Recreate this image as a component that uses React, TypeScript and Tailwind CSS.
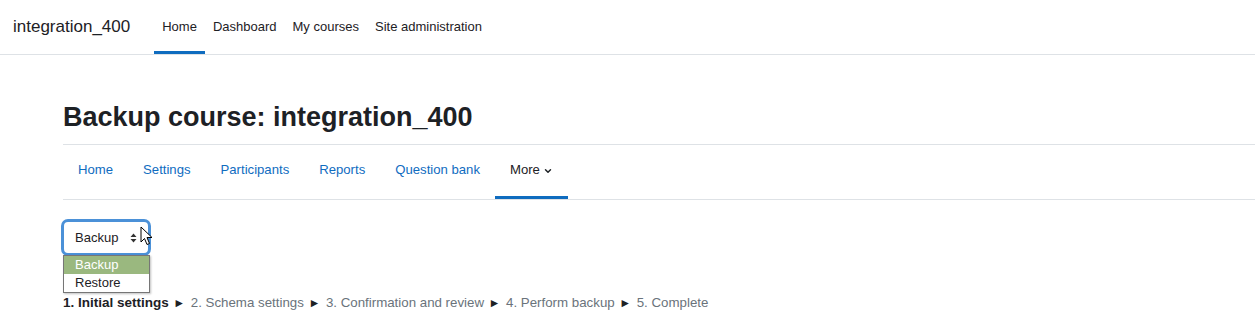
import { ChevronDown } from 'lucide-react'

const topLinks = ['Home', 'Dashboard', 'My courses', 'Site administration']
const courseLinks = ['Home', 'Settings', 'Participants', 'Reports', 'Question bank']
const steps = ['2. Schema settings', '3. Confirmation and review', '4. Perform backup', '5. Complete']

function Cursor() {
  return (
    <svg width="13" height="20" viewBox="0 0 13 20" className="absolute left-[77px] top-[7px]">
      <path d="M1 1 L1 16 L4.5 12.5 L7 18.5 L9.5 17.5 L7 11.5 L12 11.5 Z" fill="#fff" stroke="#000" strokeWidth="1" strokeLinejoin="round" />
    </svg>
  )
}

export default function App() {
  return (
    <div className="w-[1255px] h-[326px] overflow-hidden bg-white text-[#1d2125] font-['Liberation_Sans',Arial,sans-serif]">
      {/* top navbar */}
      <nav className="flex h-[55px] items-stretch border-b border-[#dee2e6]">
        <div className="flex items-center pl-[13px] pr-[24px] text-[17px] text-[#1d2125]">integration_400</div>
        <ul className="flex items-stretch">
          {topLinks.map((l, i) => (
            <li
              key={l}
              className={`flex items-center px-[8px] text-[13px] ${i === 0 ? 'border-b-[3px] border-[#0f6cbf] pt-[3px]' : ''}`}
            >
              {l}
            </li>
          ))}
        </ul>
      </nav>

      <div className="pl-[63px]">
        <h1 className="pt-[45px] pb-[10px] text-[27px] font-bold leading-[34px]">Backup course: integration_400</h1>

        {/* course nav */}
        <ul className="flex h-[56px] border-y border-[#dee2e6]">
          {courseLinks.map((l) => (
            <li key={l} className="flex items-center px-[15px] pb-[5px] text-[13.15px] text-[#0f6cbf]">
              {l}
            </li>
          ))}
          <li className="flex items-center gap-[3px] border-b-[3px] border-[#0f6cbf] px-[15px] pb-[2px] text-[13.15px]">
            More <ChevronDown size={10} strokeWidth={3.5} className="mt-[2px]" />
          </li>
        </ul>

        {/* action select */}
        <div className="relative mt-[19px] h-[76px] w-[100px]">
          <div className="absolute left-[-2px] top-0 flex h-[37px] w-[90px] items-center rounded-[7px] border-[3px] border-[#4b91d8] bg-white pl-[11px] text-[13px]">
            <span>Backup</span>
            <svg width="7" height="10" viewBox="0 0 7 10" className="ml-[12px]">
              <path d="M0.5 4 L3.5 0.5 L6.5 4 Z M0.5 6 L3.5 9.5 L6.5 6 Z" fill="#333" />
            </svg>
          </div>
          <Cursor />
          <div className="absolute left-0 top-[36px] w-[87px] border border-[#767676] bg-white text-[13px] leading-[18px] shadow-[1px_1px_2px_rgba(0,0,0,0.25)]">
            <div className="bg-[#9ab87f] pl-[11px] text-white">Backup</div>
            <div className="pl-[11px]">Restore</div>
          </div>
        </div>

        {/* backup steps */}
        <div className="-mt-[2px] flex items-center text-[13.3px] text-[#6a737b]">
          <span className="text-[13.5px] font-bold text-[#1d2125]">1. Initial settings</span>
          {steps.map((s) => (
            <span key={s} className="flex items-center">
              <span className="ml-[6px] mr-[7px] inline-flex w-[9px] justify-center overflow-visible text-[12px] text-[#1d2125]">►</span>
              {s}
            </span>
          ))}
        </div>
      </div>
    </div>
  )
}
